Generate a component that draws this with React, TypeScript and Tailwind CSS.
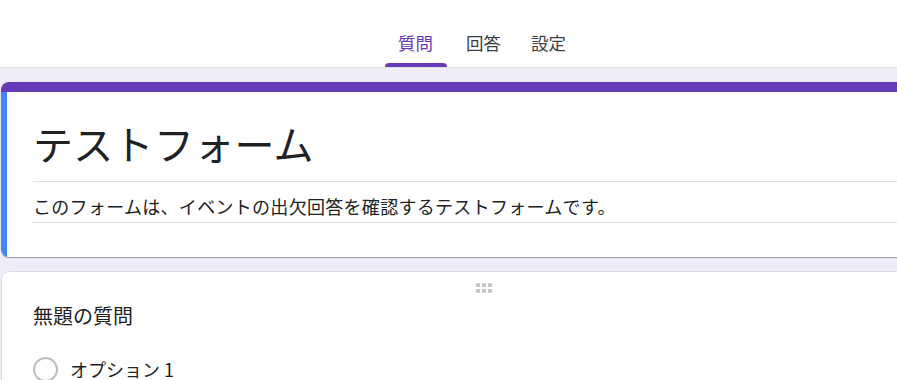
import React from "react";

const tabs = [
  { label: "質問", active: true, shift: "-ml-[3px] mr-[3px]" },
  { label: "回答", active: false, shift: "" },
  { label: "設定", active: false, shift: "" },
];

function DragDots() {
  const dots = Array.from({ length: 6 });
  return (
    <div className="grid grid-cols-3 gap-x-[2px] gap-y-[2px]">
      {dots.map((_, i) => (
        <span key={i} className="block h-[4px] w-[4px] rounded-[1px] bg-[#c4c4c4]" />
      ))}
    </div>
  );
}

export default function App() {
  return (
    <div className="h-[380px] w-[897px] overflow-hidden bg-[#f0ebf8]">
      <div className="w-[967px] font-['Noto_Sans_CJK_JP','Noto_Sans',sans-serif] text-[#202124]">
        <header className="flex h-[68px] justify-center border-b border-[#e0e0e0] bg-white">
          <nav className="flex h-[67px] items-end">
            {tabs.map((t) => (
              <div key={t.label} className={"flex w-[65px] flex-col items-center " + t.shift}>
                <span
                  className={
                    "text-[17.5px] leading-[24px] " +
                    (t.active ? "text-[#673ab7]" : "text-[#3c4043]")
                  }
                >
                  {t.label}
                </span>
                <span
                  className={
                    "mt-[8px] block h-[4px] w-[62px] rounded-t-[4px] " +
                    (t.active ? "bg-[#673ab7]" : "bg-transparent")
                  }
                />
              </div>
            ))}
          </nav>
        </header>

        <main className="flex flex-col items-center pt-[14px]">
          <section className="w-[965px] overflow-hidden rounded-[8px] bg-white shadow-[0_1px_1px_rgba(0,0,0,0.35)]">
            <div className="h-[10px] bg-[#673ab7]" />
            <div className="flex">
              <div className="w-[6px] shrink-0 rounded-bl-[8px] bg-[#4285f4]" />
              <div className="flex-1 pl-[26px] pb-[34px]">
                <div className="border-b border-[#dadce0] pt-[27px] pb-[14px]">
                  <h1 className="text-[40px] leading-[48px] font-normal tracking-[0.3px] text-[#202124]">
                    テストフォーム
                  </h1>
                </div>
                <div className="border-b border-[#e0e0e0] pt-[11px] pb-[3px]">
                  <p className="text-[18px] leading-[26px] tracking-[0.3px] text-[#202124]">
                    このフォームは、イベントの出欠回答を確認するテストフォームです。
                  </p>
                </div>
              </div>
            </div>
          </section>

          <section className="mt-[14px] h-[140px] w-[965px] rounded-[8px] border border-[#dadce0] bg-white">
            <div className="flex justify-center pt-[11px]">
              <DragDots />
            </div>
            <div className="pl-[31px] pt-[9px]">
              <h2 className="text-[20px] leading-[28px] font-normal text-[#202124]">
                無題の質問
              </h2>
              <div className="mt-[26px] flex items-center gap-[12px]">
                <span className="block h-[25px] w-[25px] rounded-full border-2 border-[#bdbdbd]" />
                <span className="text-[18px] leading-[26px] text-[#202124]">オプション 1</span>
              </div>
            </div>
          </section>
        </main>
      </div>
    </div>
  );
}
